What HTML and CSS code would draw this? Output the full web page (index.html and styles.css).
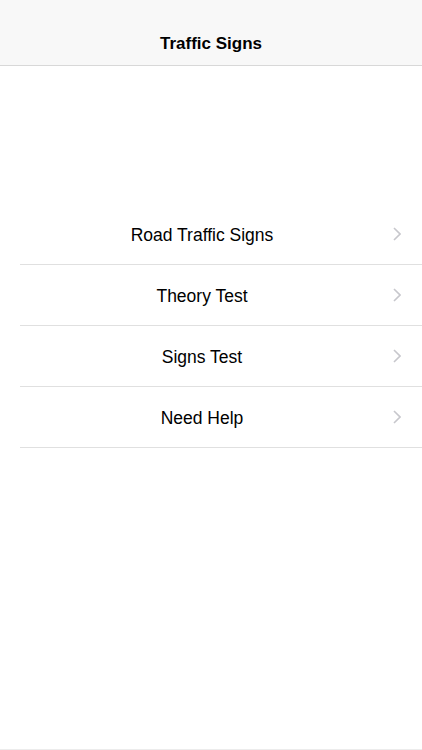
FILE: index.html
```html
<!DOCTYPE html>
<html lang="en">
<head>
    <meta charset="UTF-8">
    <meta name="viewport" content="width=device-width, initial-scale=1.0">
    <title>Traffic Signs</title>
    <link rel="stylesheet" href="styles.css">
</head>
<body>

    <div class="navbar">
        <h1>Traffic Signs</h1>
    </div>

    <div class="menu">
        <a class="menu-row" href="#">
            <span class="menu-label">Road Traffic Signs</span>
            <svg class="chevron" width="8" height="14" viewBox="0 0 8 14"><path d="M1 1l6 6-6 6" fill="none" stroke="#c7c7cc" stroke-width="1.6"/></svg>
        </a>
        <a class="menu-row" href="#">
            <span class="menu-label">Theory Test</span>
            <svg class="chevron" width="8" height="14" viewBox="0 0 8 14"><path d="M1 1l6 6-6 6" fill="none" stroke="#c7c7cc" stroke-width="1.6"/></svg>
        </a>
        <a class="menu-row" href="#">
            <span class="menu-label">Signs Test</span>
            <svg class="chevron" width="8" height="14" viewBox="0 0 8 14"><path d="M1 1l6 6-6 6" fill="none" stroke="#c7c7cc" stroke-width="1.6"/></svg>
        </a>
        <a class="menu-row" href="#">
            <span class="menu-label">Need Help</span>
            <svg class="chevron" width="8" height="14" viewBox="0 0 8 14"><path d="M1 1l6 6-6 6" fill="none" stroke="#c7c7cc" stroke-width="1.6"/></svg>
        </a>
    </div>

    <div class="bottom-line"></div>

</body>
</html>
```

FILE: styles.css
```css
body {
    font-family: "Liberation Sans", Arial, sans-serif;
    background-color: #fff;
    margin: 0;
    padding: 0;
    height: 750px;
    display: flex;
    flex-direction: column;
    overflow: hidden;
}
.navbar {
    height: 66px;
    background-color: #f8f8f8;
    border-bottom: 1px solid #d8d8d8;
    box-sizing: border-box;
    padding-top: 22px;
    display: flex;
    align-items: center;
    justify-content: center;
}
.navbar h1 {
    margin: 0;
    font-size: 17px;
    font-weight: bold;
    color: #000;
}
.menu {
    margin-top: 138px;
    margin-left: 20px;
}
.menu-row {
    display: flex;
    align-items: center;
    height: 61px;
    box-sizing: border-box;
    border-bottom: 1px solid #e0e0e0;
    text-decoration: none;
    color: #000;
}
.menu-label {
    flex: 1;
    text-align: center;
    font-size: 17.5px;
    margin-top: 2px;
}
.chevron {
    margin-left: 9px;
    margin-right: 21px;
}
.bottom-line {
    margin-top: auto;
    height: 1px;
    background-color: #ececec;
}
```
